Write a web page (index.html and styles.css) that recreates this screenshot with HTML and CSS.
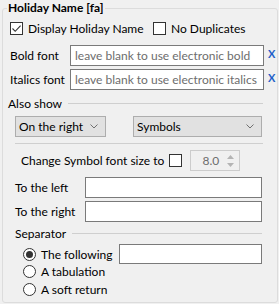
FILE: index.html
```html
<!DOCTYPE html>
<html lang="en">
<head>
    <meta charset="UTF-8">
    <title>Holiday Name</title>
    <link rel="stylesheet" href="styles.css">
</head>
<body>
    <fieldset class="group">
        <legend>Holiday Name [fa]</legend>
        <div class="inner">

        <div class="row checks">
            <label class="check"><span class="box"><svg width="11" height="11" viewBox="0 0 11 11"><path d="M1.5 5.5 L4.2 8.3 L9.6 2.6" fill="none" stroke="#333" stroke-width="1.1"/></svg></span>Display Holiday Name</label>
            <label class="check"><span class="box"></span>No Duplicates</label>
        </div>

        <div class="row font-row first">
            <span class="lbl">Bold font</span>
            <input class="text" type="text" placeholder="leave blank to use electronic bold">
            <span class="clear">X</span>
        </div>
        <div class="row font-row">
            <span class="lbl">Italics font</span>
            <input class="text" type="text" placeholder="leave blank to use electronic italics">
            <span class="clear">X</span>
        </div>

        <div class="row heading also">Also show</div>

        <div class="row selects">
            <div class="select narrow">On the right <svg class="chev" width="8" height="5" viewBox="0 0 8 5"><path d="M0.5 0.5 L4 4 L7.5 0.5" fill="none" stroke="#707070" stroke-width="1"/></svg></div>
            <div class="select wide">Symbols <svg class="chev" width="8" height="5" viewBox="0 0 8 5"><path d="M0.5 0.5 L4 4 L7.5 0.5" fill="none" stroke="#707070" stroke-width="1"/></svg></div>
        </div>

        <div class="rule"></div>

        <div class="row size-row">
            <span>Change Symbol font size to</span>
            <span class="box"></span>
            <div class="spin">
                <span class="spin-val">8.0</span>
                <span class="spin-arrows">
                    <svg width="7" height="4" viewBox="0 0 7 4"><path d="M0 4 L3.5 0 L7 4 Z" fill="#b4b4b4"/></svg>
                    <svg width="7" height="4" viewBox="0 0 7 4"><path d="M0 0 L3.5 4 L7 0 Z" fill="#b4b4b4"/></svg>
                </span>
            </div>
        </div>

        <div class="row side-row first">
            <span class="lbl">To the left</span>
            <input class="text" type="text">
        </div>
        <div class="row side-row">
            <span class="lbl">To the right</span>
            <input class="text" type="text">
        </div>

        <div class="row heading sep">Separator</div>

        <div class="row radio-row following">
            <label class="radio"><span class="dot on"></span>The following</label>
            <input class="text" type="text">
        </div>
        <div class="row radio-row tab">
            <label class="radio"><span class="dot"></span>A tabulation</label>
        </div>
        <div class="row radio-row soft">
            <label class="radio"><span class="dot"></span>A soft return</label>
        </div>
        </div>
    </fieldset>
</body>
</html>
```

FILE: styles.css
```css
* {
    box-sizing: border-box;
}
body {
    margin: 0;
    background: #f0f0f0;
    font-family: Lato, "Noto Sans", sans-serif;
    font-size: 12px;
    color: #000;
}
.group {
    width: 276px;
    height: 302px;
    margin: 1px 0 0 2px;
    padding: 0;
    border: 1px solid #dcdcdc;
    border-radius: 3px;
}
.group legend {
    font-weight: bold;
    line-height: 14px;
    padding: 0 1px;
    margin-left: 4px;
}
.inner {
    padding: 0 2px 0 6px;
}
.row {
    display: flex;
    align-items: center;
}
.checks {
    height: 14px;
    margin-top: 6px;
    padding-left: 1px;
}
.check {
    display: flex;
    align-items: center;
    gap: 5px;
}
.check:first-child {
    width: 143px;
}
.box {
    width: 13px;
    height: 13px;
    border: 1px solid #333;
    background: #fff;
    display: inline-flex;
    align-items: center;
    justify-content: center;
    flex: none;
}
.text {
    height: 21px;
    border: 1px solid #7a7a7a;
    background: #fff;
    font: inherit;
    padding: 0 4px;
    outline: none;
}
.text::placeholder {
    color: #6d6d6d;
}
.font-row {
    height: 21px;
    margin-top: 3px;
    padding-left: 1px;
}
.font-row.first {
    margin-top: 10px;
}
.font-row .lbl {
    width: 60px;
}
.font-row .text {
    width: 194px;
}
.clear {
    margin-left: 4px;
    color: #1f5fc8;
    font-weight: bold;
    font-size: 11px;
    align-self: flex-start;
    margin-top: 2px;
}
.heading {
    height: 14px;
    margin-right: 12px;
}
.heading::after {
    content: "";
    flex: 1;
    height: 1px;
    background: #cfcfcf;
    margin-left: 6px;
}
.also {
    margin-top: 6px;
    margin-left: -1px;
}
.selects {
    margin-top: 6px;
    padding-left: 6px;
    gap: 27px;
}
.select {
    height: 21px;
    background: #e1e1e1;
    border: 1px solid #adadad;
    display: flex;
    align-items: center;
    justify-content: space-between;
    padding: 0 7px 0 3px;
}
.narrow {
    width: 91px;
}
.wide {
    width: 129px;
}
.rule {
    height: 1px;
    background: #cfcfcf;
    margin: 6px 12px 0 6px;
}
.size-row {
    height: 21px;
    margin-top: 6px;
    padding-left: 12px;
}
.size-row .box {
    margin-left: 5px;
}
.spin {
    width: 50px;
    height: 21px;
    margin-left: 8px;
    border: 1px solid #cccccc;
    display: flex;
    align-items: center;
    justify-content: flex-end;
    color: #6d6d6d;
}
.spin-val {
    margin-right: 8px;
}
.spin-arrows {
    display: flex;
    flex-direction: column;
    gap: 4px;
    margin-right: 5px;
}
.spin-arrows svg {
    display: block;
}
.side-row {
    height: 21px;
    margin-top: 3px;
    padding-left: 6px;
}
.side-row.first {
    margin-top: 6px;
}
.side-row .lbl {
    width: 70px;
}
.side-row .text {
    width: 177px;
}
.sep {
    margin-top: 4px;
    padding-left: 6px;
    margin-right: 13px;
}
.radio-row {
    height: 14px;
    padding-left: 14px;
}
.radio {
    display: flex;
    align-items: center;
    gap: 5px;
}
.dot {
    width: 13px;
    height: 13px;
    border: 1px solid #333;
    border-radius: 50%;
    background: #fff;
    display: flex;
    align-items: center;
    justify-content: center;
}
.dot.on::after {
    content: "";
    width: 7px;
    height: 7px;
    border-radius: 50%;
    background: #333;
}
.following {
    height: 20px;
    margin-top: 4px;
}
.following .radio {
    width: 96px;
}
.following .text {
    width: 143px;
    height: 20px;
}
.tab {
    margin-top: 0;
}
.soft {
    margin-top: 4px;
}
```
